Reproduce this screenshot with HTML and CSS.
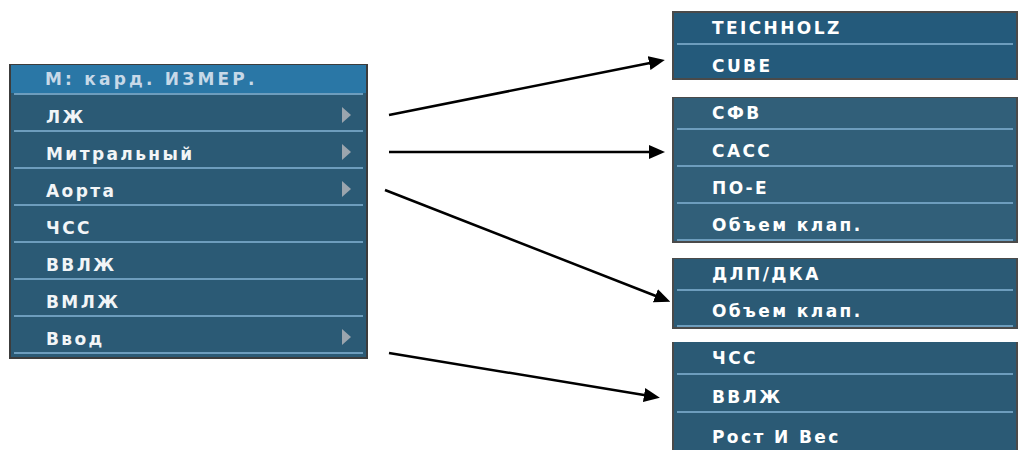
FILE: index.html
```html
<!DOCTYPE HTML>
<html>
<head>
    <meta charset="utf-8">
    <link rel="stylesheet" href="styles.css">
</head>
<body>
    <div class="stage">
        <div class="main-col">
            <div class="menu main-menu">
                <div class="title">M: кард. ИЗМЕР.</div>
                <div class="list">
                    <div class="item sub">ЛЖ</div>
                    <div class="item sub">Митральный</div>
                    <div class="item sub">Аорта</div>
                    <div class="item">ЧСС</div>
                    <div class="item">ВВЛЖ</div>
                    <div class="item">ВМЛЖ</div>
                    <div class="item sub">Ввод</div>
                </div>
            </div>
        </div>

        <div class="side-col">
            <div class="menu side-menu lv">
                <div class="first">TEICHHOLZ</div>
                <div class="row r33">CUBE</div>
            </div>
            <div class="menu side-menu mitral">
                <div class="first">СФВ</div>
                <div class="row">САСС</div>
                <div class="row">ПО-Е</div>
                <div class="row last">Объем клап.</div>
            </div>
            <div class="menu side-menu aorta">
                <div class="first">ДЛП/ДКА</div>
                <div class="row r34 last">Объем клап.</div>
            </div>
            <div class="menu side-menu input">
                <div class="first">ЧСС</div>
                <div class="row r36">ВВЛЖ</div>
                <div class="row low">Рост И Вес</div>
            </div>
        </div>

        <svg class="arrows" width="1018" height="450" viewBox="0 0 1018 450">
            <defs>
                <marker id="head" viewBox="0 0 16 14" refX="6" refY="7" markerWidth="16" markerHeight="14" markerUnits="userSpaceOnUse" orient="auto">
                    <path d="M0 0 L16 7 L0 14 Z" fill="#000"/>
                </marker>
            </defs>
            <line x1="389" y1="115" x2="655" y2="62" marker-end="url(#head)"/>
            <line x1="389" y1="152" x2="655" y2="152" marker-end="url(#head)"/>
            <line x1="385" y1="190" x2="661" y2="298" marker-end="url(#head)"/>
            <line x1="389" y1="353" x2="650" y2="396" marker-end="url(#head)"/>
        </svg>
    </div>
</body>
</html>
```

FILE: styles.css
```css
body {
    margin: 0;
    padding: 0;
    background-color: #ffffff;
    font-family: "DejaVu Sans", Verdana, sans-serif;
}

.stage {
    position: relative;
    width: 1018px;
    height: 450px;
    overflow: hidden;
    display: flex;
}

.main-col {
    padding: 64px 0 0 9px;
    width: 359px;
}

.side-col {
    margin-left: auto;
    width: 346px;
    display: flex;
    flex-direction: column;
}

.menu {
    background-color: #2b5a75;
    color: #f2f5f7;
    font-size: 17px;
    font-weight: bold;
    letter-spacing: 2.4px;
    white-space: nowrap;
    flex-shrink: 0;
}

/* main menu */

.main-menu {
    border: 2px solid #3c3c3c;
    padding-bottom: 3px;
}

.title {
    height: 28px;
    line-height: 28px;
    padding-left: 34px;
    background-color: #2a77a6;
    color: #c7d9e8;
    letter-spacing: 3.2px;
    margin-top: -1px;
}

.list {
    padding: 0 3px;
}

.item {
    border-top: 2px solid #6d9dbd;
    display: flex;
    align-items: flex-end;
    padding: 0 12px 3px 32px;
    height: 32px;
}

.item:last-child {
    border-bottom: 2px solid #6d9dbd;
}

.item.sub::after {
    content: "";
    margin-left: auto;
    margin-bottom: 4px;
    border-left: 9px solid #9ba5ae;
    border-top: 8px solid transparent;
    border-bottom: 8px solid transparent;
}

/* side menus */

.side-menu {
    border: 2px solid #4a4a4a;
    padding: 0 3px;
    color: #ffffff;
}

.side-menu .first {
    height: 30px;
    display: flex;
    align-items: flex-end;
    padding: 0 0 5px 35px;
    box-sizing: border-box;
}

.side-menu .row {
    border-top: 2px solid #6d9dbd;
    display: flex;
    align-items: flex-end;
    padding: 0 0 4px 35px;
    height: 31px;
}

.side-menu .row.r33 {
    padding-bottom: 2px;
}

.side-menu .row.r34 {
    height: 30px;
}

.side-menu .row.r36 {
    height: 32px;
}

.side-menu .row.low {
    height: 34px;
    padding-bottom: 4px;
}

.side-menu .row.last {
    border-bottom: 2px solid #6d9dbd;
}

.lv {
    margin-top: 11px;
    background-color: #245a7b;
}

.mitral {
    margin-top: 17px;
    border-top-width: 1px;
    background-color: #315f79;
}

.aorta {
    margin-top: 15px;
    border-top-width: 1px;
}

.input {
    margin-top: 13px;
    border-top-width: 0;
    border-bottom: none;
}

.input .first {
    height: 31px;
}

/* connector arrows */

.arrows {
    position: absolute;
    left: 0;
    top: 0;
    pointer-events: none;
}

.arrows line {
    stroke: #000000;
    stroke-width: 2.5;
}
```
